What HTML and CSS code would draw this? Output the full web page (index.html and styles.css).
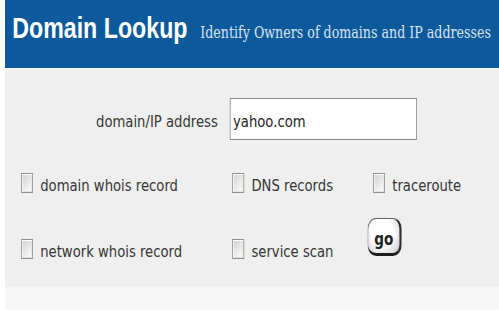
FILE: index.html
```html
<!DOCTYPE html>
<html>
<head>
<meta charset="utf-8">
<link rel="stylesheet" href="styles.css">
</head>
<body>
<div class="frame">
<div class="page">
  <header class="header">
    <h1 class="title">Domain Lookup</h1>
    <span class="subtitle">Identify Owners of domains and IP addresses</span>
  </header>
  <main class="panel">
    <div class="addr-row">
      <label class="addr-label">domain/IP address</label>
      <div class="addr-input">yahoo.com</div>
    </div>
    <div class="options">
      <div class="opt"><span class="cb"></span><span>domain whois record</span></div>
      <div class="opt"><span class="cb"></span><span>DNS records</span></div>
      <div class="opt"><span class="cb"></span><span>traceroute</span></div>
      <div class="opt"><span class="cb"></span><span>network whois record</span></div>
      <div class="opt"><span class="cb"></span><span>service scan</span></div>
      <div class="opt go-cell"><span class="go">go</span></div>
    </div>
  </main>
  <div class="footer"></div>
</div>
</div>
</body>
</html>
```
FILE: styles.css
```css
html, body {
  margin: 0;
  padding: 0;
  background: #ffffff;
  overflow: hidden;
}
.frame {
  margin-left: 5px;
  width: 494px;
  height: 310px;
  overflow: hidden;
}
/* the reference is a horizontally squeezed capture: lay out wide, then condense */
.page {
  width: 618px;
  height: 310px;
  display: flex;
  flex-direction: column;
  transform: scaleX(0.8);
  transform-origin: 0 0;
}
.header {
  height: 70px;
  background: #0c5a9b;
  display: flex;
  align-items: baseline;
  padding: 0 0 0 9px;
  box-sizing: border-box;
  border-bottom: 2px solid #f5f5f5;
  white-space: nowrap;
}
.title {
  margin: 0;
  padding-top: 14px;
  line-height: 28px;
  font-family: "Liberation Sans", Arial, sans-serif;
  font-weight: bold;
  font-size: 29px;
  color: #ffffff;
}
.subtitle {
  margin-left: 16px;
  font-family: "DejaVu Serif", serif;
  font-size: 15.8px;
  color: #d9e4f0;
}
.panel {
  background: #efefef;
  height: 217px;
  box-sizing: border-box;
  padding-top: 28px;
  font-family: "DejaVu Sans", sans-serif;
  color: #353535;
  font-size: 16.5px;
}
.addr-row {
  display: flex;
  align-items: center;
}
.addr-label {
  width: 266px;
  text-align: right;
  padding-top: 5px;
}
.addr-input {
  margin-left: 15px;
  width: 234px;
  height: 42px;
  box-sizing: border-box;
  border: 1px solid #8a8a8a;
  background: #ffffff;
  color: #222;
  padding: 13px 0 0 3px;
}
.options {
  display: grid;
  grid-template-columns: 264px 176px auto;
  grid-template-rows: 25px 26px;
  row-gap: 41px;
  padding-left: 20px;
  margin-top: 30px;
}
.opt {
  display: flex;
  align-items: center;
  gap: 9px;
  white-space: nowrap;
}
.opt > span:last-child {
  padding-top: 5px;
}
.cb {
  flex: none;
  width: 15px;
  height: 20px;
  border: 1px solid #8e8e8e;
  background: linear-gradient(135deg, #cfcfcf, #f6f6f6 80%);
  box-sizing: border-box;
  box-shadow: inset 1px 1px 0 #ffffff, inset -1px -1px 0 #e0e0e0;
}
.go-cell {
  align-items: flex-start;
}
.opt > .go {
  margin-left: -7px;
  margin-top: -18px;
  padding-top: 0;
  width: 43px;
  height: 38px;
  box-sizing: border-box;
  border-radius: 11px;
  border: 1px solid #666;
  border-bottom: 3px solid #1e1e1e;
  border-right: 3px solid #2e2e2e;
  background: radial-gradient(ellipse at 45% 40%, #ffffff 45%, #e2e2e2 75%, #b5b5b5);
  font-weight: bold;
  font-size: 17px;
  color: #222;
  text-align: center;
  line-height: 30px;
}
.footer {
  flex: 1;
  background: #f7f7f7;
}
```
